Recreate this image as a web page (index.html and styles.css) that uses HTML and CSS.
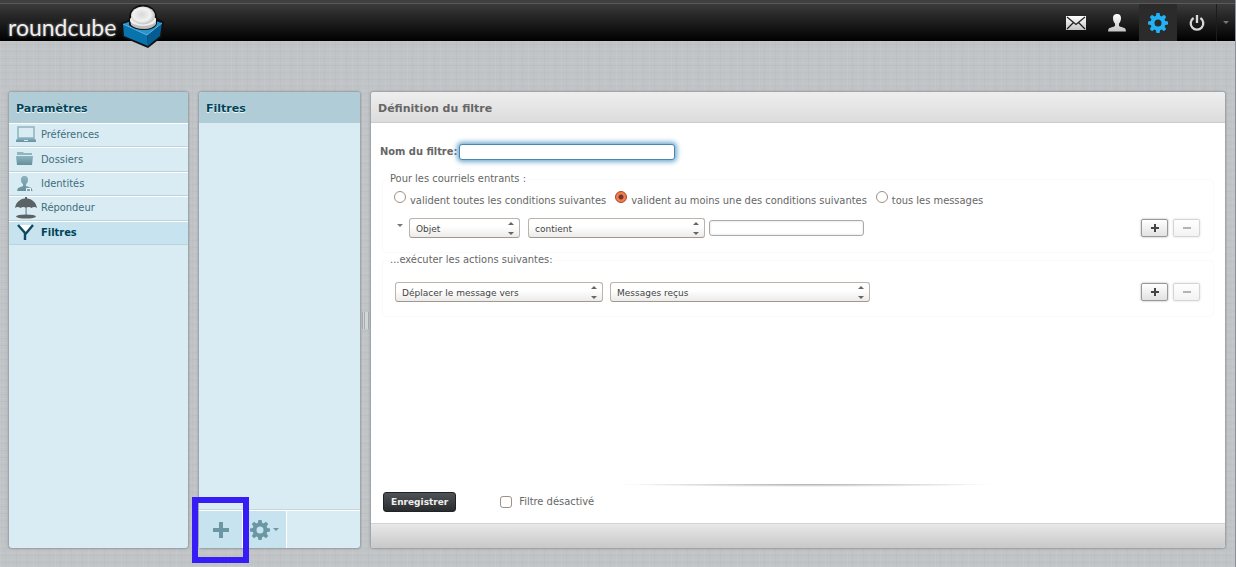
FILE: index.html
```html
<!DOCTYPE html>
<html lang="fr">
<head>
<meta charset="utf-8">
<title>Roundcube - Filtres</title>
<link rel="stylesheet" href="styles.css">
</head>
<body>
<svg class="defs" aria-hidden="true">
  <defs>
    <linearGradient id="silver" x1="0" y1="0" x2="0" y2="1"><stop offset="0" stop-color="#fff"/><stop offset="1" stop-color="#c4c4c4"/></linearGradient>
    <linearGradient id="teal" x1="0" y1="0" x2="0" y2="1"><stop offset="0" stop-color="#8db4c0"/><stop offset="1" stop-color="#648f9b"/></linearGradient>
    <radialGradient id="ball" cx=".45" cy=".45" r=".6"><stop offset="0" stop-color="#d8d8d8"/><stop offset=".6" stop-color="#f2f2f2"/><stop offset="1" stop-color="#b5b5b5"/></radialGradient>
    <symbol id="gear" viewBox="0 0 20 20"><path fill-rule="evenodd" d="M8.400 0h3.200l.5 2.800 1.500.6 2.400-1.600 2.200 2.200-1.600 2.400.6 1.500 2.800.5v3.200l-2.800.5-.6 1.500 1.600 2.400-2.200 2.200-2.400-1.600-1.500.6-.5 2.800H8.400l-.5-2.800-1.500-.6L4 18.200 1.800 16l1.600-2.400-.6-1.500L0 11.600V8.400l2.800-.5.6-1.500L1.800 4 4 1.800l2.400 1.600 1.500-.6zM10 6.500a3.500 3.500 0 1 0 0 7 3.500 3.500 0 0 0 0-7z"/></symbol>
  </defs>
</svg>

<header class="topbar">
  <a class="logo" href="#">
    <span class="logo-text">roundcube</span>
    <svg class="logo-cube" viewBox="0 0 44 44" aria-hidden="true">
      <path d="M0 18 10 14 33 11 43 17 41 32 27 43 1 32z" fill="#111"/>
      <path d="M2 19 21 12 41 18 26 30z" fill="#2a93cb"/>
      <path d="M2 19 26 30 27 41 3 31z" fill="#0873ad"/>
      <path d="M26 30 41 18 39 31 27 41z" fill="#045c91"/>
      <path d="M2 19 26 30 41 18" fill="none" stroke="#5ab8e6"/>
      <path d="M8 13a14 13 0 0 1 28-1v7q-3 6-13 6T8 20z" fill="#111"/>
      <path d="M9 14 35 13v6q-3 5-12 5T10 20z" fill="#bdbdbd"/>
      <ellipse cx="22" cy="15" rx="13" ry="6" fill="#efefef"/>
      <ellipse cx="22" cy="10.500" rx="12" ry="9" fill="url(#ball)"/>
    </svg>
  </a>
  <nav class="tasks">
    <a class="task" href="#" aria-label="Courriel"><svg width="20" height="14" viewBox="0 0 20 14"><path fill="url(#silver)" d="M0 0h20v14H0z"/><path d="M1 1l9 7.500L19 1M1 13l6.500-6.500M19 13l-6.500-6.500" fill="none" stroke="#222" stroke-width="1.300"/></svg></a>
    <a class="task" href="#" aria-label="Contacts"><svg width="18" height="18" viewBox="0 0 18 18"><path fill="url(#silver)" d="M9 0c3 0 4.200 2 4 4.500-.2 2.500-1 4-2 5V12c1 1 6 1.500 6.500 3L18 17.500H0L.5 15C1 13.500 6 13 7 12V9.500c-1-1-1.800-2.500-2-5C4.800 2 6 0 9 0z"/></svg></a>
    <a class="task task-active" href="#" aria-label="Paramètres"><svg width="20" height="20" fill="#21b1f5"><use href="#gear"/></svg></a>
    <a class="task" href="#" aria-label="Déconnexion"><svg width="16" height="16" viewBox="0 0 16 16" fill="none" stroke="#d8d8d8" stroke-width="2.300"><path d="M4.600 3A6.300 6.300 0 1 0 11.400 3M8 0v8"/></svg></a>
    <button class="task-more" aria-label="Plus"><span class="caret"></span></button>
  </nav>
</header>

<main class="content">
  <section class="panel blue sections">
    <h2 class="panel-title">Paramètres</h2>
    <nav class="list">
      <a class="item" href="#"><svg class="item-icon" viewBox="0 0 22 22"><rect x="3" y="3" width="16" height="11" fill="#d9ecf4" stroke="#8fb2bd" stroke-width="1.500"/><path fill="url(#teal)" d="M3 14h16l2 2v2H1v-2z"/><path fill="#d9ecf4" d="M9 16h4v1H9z"/></svg>Préférences</a>
      <a class="item" href="#"><svg class="item-icon" viewBox="0 0 22 22"><path fill="#8fb5bf" d="M2 3h6l1 1h8v2H2z"/><path fill="url(#teal)" d="M1 7h17l-1 9H2z"/></svg>Dossiers</a>
      <a class="item" href="#"><svg class="item-icon" viewBox="0 0 22 22"><path fill="url(#teal)" d="M9.500 3c3 0 3.500 2 3.500 4s-1 3.500-2 4v2l5.500 2 1 3H2l1-3 5-2v-2c-1-.5-2-2-2-4s.5-4 3.500-4z"/><path fill="#e7f4f8" d="M11 15h5v3h-5z"/><path fill="#7fa5af" d="M12 16h3v2h-3z"/></svg>Identités</a>
      <a class="item" href="#"><svg class="item-icon" viewBox="0 0 22 22"><path fill="#5b6266" d="M0 11C1 5 5 2 10 1.500V0h2v1.500C17 2 21 5 22 11c-2-1.500-4-1-5.500 0-2-1.500-3.500-1.500-5.500 0-2-1.500-3.500-1.500-5.500 0C4 10 2 9.500 0 11z"/><path fill="#7d868a" d="M10.500 10h1.200v9h-1.200z"/><ellipse cx="11" cy="19.500" rx="10" ry="2" fill="#5b6266"/></svg>Répondeur</a>
      <a class="item item-active" href="#"><svg class="item-icon" viewBox="0 0 22 22"><path fill="#fff" d="M4 3h13l-6.500 8z"/><path d="M3 3 10 11v7M18 3 10.500 12" fill="none" stroke="#0b4a60" stroke-width="2.400"/></svg>Filtres</a>
    </nav>
  </section>

  <section class="panel blue filters">
    <h2 class="panel-title">Filtres</h2>
    <div class="filter-list"></div>
    <div class="footer">
      <button class="footer-btn add" aria-label="Ajouter un filtre"><svg width="16" height="16" viewBox="0 0 16 16"><path fill="#6a97a3" d="M6 0h4v6h6v4h-6v6H6v-6H0V6h6z"/></svg></button>
      <button class="footer-btn" aria-label="Actions"><svg width="20" height="20" fill="#6a97a3"><use href="#gear"/></svg><span class="caret"></span></button>
    </div>
    <div class="highlight"></div>
  </section>

  <div class="splitter"></div>

  <section class="panel editor">
    <h2 class="panel-title">Définition du filtre</h2>
    <form class="form">
      <div class="name-row">
        <label for="name">Nom du filtre:</label>
        <input class="text name" id="name" type="text" autofocus>
      </div>
      <fieldset class="group">
        <legend>Pour les courriels entrants :</legend>
        <div class="radios">
          <label class="choice"><input type="radio" name="join">valident toutes les conditions suivantes</label>
          <label class="choice"><input type="radio" name="join" checked>valident au moins une des conditions suivantes</label>
          <label class="choice"><input type="radio" name="join">tous les messages</label>
        </div>
        <div class="rule">
          <button type="button" class="advanced" aria-label="Avancé"><span class="caret"></span></button>
          <span class="select field"><select aria-label="Champ"><option>Objet</option></select></span>
          <span class="select operator"><select aria-label="Opérateur"><option>contient</option></select></span>
          <input class="text value" type="text" aria-label="Valeur">
          <span class="row-buttons"><button type="button" class="mini plus" aria-label="Ajouter"></button><button type="button" class="mini" disabled aria-label="Supprimer"></button></span>
        </div>
      </fieldset>
      <fieldset class="group">
        <legend>...exécuter les actions suivantes:</legend>
        <div class="rule action-rule">
          <span class="select action"><select aria-label="Action"><option>Déplacer le message vers</option></select></span>
          <span class="select target"><select aria-label="Dossier"><option>Messages reçus</option></select></span>
          <span class="row-buttons"><button type="button" class="mini plus" aria-label="Ajouter"></button><button type="button" class="mini" disabled aria-label="Supprimer"></button></span>
        </div>
      </fieldset>
      <div class="submit-row">
        <button class="save" type="button">Enregistrer</button>
        <label class="disable"><input type="checkbox">Filtre désactivé</label>
      </div>
    </form>
    <div class="editor-footer"></div>
  </section>
</main>
</body>
</html>
```
FILE: styles.css
```css
* { box-sizing: border-box; }
body {
  margin: 0;
  min-height: 100vh;
  display: flex;
  flex-direction: column;
  font: 11px/14px "DejaVu Sans Condensed", "DejaVu Sans", sans-serif;
  color: #666;
  background-color: #c0c4c7;
  background-image:
    repeating-linear-gradient(90deg, rgba(255,255,255,.06) 0 1px, transparent 1px 5px, rgba(90,100,110,.04) 5px 6px, transparent 6px 11px),
    repeating-linear-gradient(0deg, rgba(255,255,255,.06) 0 1px, transparent 1px 4px, rgba(90,100,110,.04) 4px 5px, transparent 5px 7px);
  border-right: 1px solid #8f9296;
}
button, input, select { font: inherit; color: inherit; margin: 0; }
button { padding: 0; border: 0; background: none; }
a { color: inherit; text-decoration: none; }
.defs { position: absolute; width: 0; height: 0; }

.topbar {
  height: 41px;
  display: flex;
  justify-content: space-between;
  border-top: 3px solid #404040;
  background: linear-gradient(#3c3c3c, #000);
  box-shadow: inset 0 1px #5a5a5a;
}
.logo { display: flex; align-items: flex-start; padding-left: 8px; }
.logo-text {
  width: 113px;
  padding-top: 11px;
  font: 23px/26px Lato, sans-serif;
  color: #eee;
  text-shadow: 0 0 3px #888;
}
.logo-cube { width: 44px; height: 44px; margin-top: 2px; }
.tasks { display: flex; padding-top: 1px; }
.task {
  width: 38px;
  display: flex;
  align-items: center;
  justify-content: center;
}
.task + .task { margin-left: 3px; }
.task-active + .task { margin-left: 1px; }
.task-active { background: #2b2b2b; }
.task-more {
  width: 19px;
  display: flex;
  align-items: center;
  justify-content: center;
  border-left: 1px solid #1c1c1c;
}
.caret {
  display: block;
  border: 3px solid transparent;
  border-top-color: #777;
  border-bottom: 0;
}

.content {
  flex: 1;
  display: flex;
  padding: 51px 10px 19px 9px;
}
.panel {
  display: flex;
  flex-direction: column;
  border-radius: 3px;
  background: #fff;
  box-shadow: 0 0 2px 1px #969a9c;
}
.panel-title {
  height: 31px;
  margin: 0;
  padding: 0 7px;
  font: bold 11px/33px "DejaVu Sans", sans-serif;
  color: #666;
  border-bottom: 1px solid #ccc;
  border-radius: 3px 3px 0 0;
  background: linear-gradient(#eee, #dcdcdc);
}
.blue { position: relative; background: #d9ecf4; }
.blue .panel-title {
  color: #004458;
  background: #b0ccd7;
  border-bottom-color: #b0ccd7;
  text-shadow: 0 1px 1px #fff;
}
.sections { width: 179px; margin-right: 11px; }
.filters { width: 161px; }

.list { height: 122px; display: grid; grid-auto-rows: 1fr; }
.item {
  display: flex;
  align-items: center;
  gap: 4px;
  padding-left: 6px;
  color: #3f6d7b;
  border-top: 1px solid #fff;
  border-bottom: 1px solid #bbd3da;
}
.item-icon { width: 22px; height: 22px; }
.item-active { font-weight: bold; color: #004458; background: #c7e3ef; }

.filter-list { flex: 1; }
.footer {
  height: 38px;
  display: flex;
  border-top: 1px solid #fff;
  box-shadow: 0 -1px #c5d5da;
}
.footer-btn {
  width: 44px;
  display: flex;
  align-items: center;
  justify-content: center;
  gap: 3px;
  background: #c7e3ef;
  border-right: 1px solid #fff;
}
.footer-btn .caret { border-top-color: #6a97a3; }
.highlight {
  position: absolute;
  left: -7px;
  bottom: -15px;
  width: 57px;
  height: 66px;
  border: 6px solid #371df5;
}

.splitter {
  width: 11px;
  display: flex;
  align-items: center;
  justify-content: center;
}
.splitter::before {
  content: "";
  width: 5px;
  height: 17px;
  border: 1px solid #a4abae;
  border-width: 0 1px;
  background: linear-gradient(90deg, #d0d6d8 0 1px, #a4abae 1px 2px, #d0d6d8 2px);
}

.editor { flex: 1; min-width: 0; }
.form { flex: 1; display: flex; flex-direction: column; padding: 21px 11px 11px 9px; }
.name-row { display: flex; align-items: center; gap: 2px; }
.name-row label { font-weight: bold; }
.text {
  height: 16px;
  padding: 0 2px;
  border: 1px solid #aaa;
  border-radius: 3px;
  background: #fff;
  box-shadow: inset 0 0 2px 1px #eee;
}
.name { width: 216px; }
.name:focus { outline: 0; border-color: #4787b1; box-shadow: 0 0 5px 2px #71a9ce; }
.value { width: 155px; }

.group {
  min-width: 0;
  margin: 12px 0 0 2px;
  padding: 0 13px 14px 7px;
  border: 1px solid #fafafa;
  border-radius: 4px;
}
.group + .group { margin-top: 0; }
legend { padding: 0; }
.radios { display: flex; gap: 9px; padding: 5px 0 0 4px; }
.choice { display: flex; align-items: flex-start; gap: 4px; line-height: 20px; }
input[type="radio"], input[type="checkbox"] {
  appearance: none;
  width: 12px;
  height: 12px;
  border: 1px solid #a08f84;
  border-radius: 50%;
  background: #fff;
}
input[type="radio"]:checked {
  border-color: #a94420;
  background: radial-gradient(circle, #6d3a2a 0 2px, #f37a51 3px);
}
input[type="checkbox"] { border-radius: 3px; }

.rule { display: flex; align-items: center; padding-top: 7px; }
.advanced { width: 19px; height: 16px; display: flex; justify-content: center; align-self: flex-start; padding-top: 6px; }
.select { position: relative; }
.select select {
  appearance: none;
  display: block;
  width: 100%;
  height: 20px;
  padding: 1px 20px 0 6px;
  font: 9px "DejaVu Sans", sans-serif;
  color: #444;
  border: 1px solid #bdb3ab;
  border-bottom-color: #a3988f;
  border-radius: 3px;
  background: linear-gradient(#fff 40%, #ecebe9);
}
.select::before, .select::after {
  content: "";
  position: absolute;
  right: 6px;
  border: 3px solid transparent;
  pointer-events: none;
}
.select::before { top: 4px; border-top: 0; border-bottom-color: #666; }
.select::after { bottom: 3px; border-bottom: 0; border-top-color: #666; }
.field { width: 111px; }
.operator { width: 177px; margin: 0 4px 0 8px; }
.action { width: 208px; margin-right: 7px; }
.target { width: 260px; }
.action-rule { padding: 15px 0 0 5px; }
.row-buttons { margin-left: auto; display: flex; gap: 5px; }
.mini {
  position: relative;
  width: 27px;
  height: 18px;
  border: 1px solid #999;
  border-radius: 2px;
  background: linear-gradient(#fff, #e2e2e2);
  box-shadow: 0 0 2px #999;
  color: #444;
}
.mini::before, .plus::after {
  content: "";
  position: absolute;
  left: 9px;
  top: 7px;
  width: 8px;
  height: 2px;
  background: currentColor;
}
.plus::after { left: 12px; top: 4px; width: 2px; height: 8px; }
.mini:disabled { opacity: .4; }

.submit-row {
  display: flex;
  align-items: center;
  gap: 44px;
  margin-top: auto;
  padding: 8px 0 0 3px;
  background: radial-gradient(ellipse 190px 3px at 426px 0, #aaa, transparent) no-repeat;
}
.save {
  height: 20px;
  padding: 0 7px;
  font: bold 9px "DejaVu Sans", sans-serif;
  color: #eee;
  border: 1px solid #1d2326;
  border-radius: 3px;
  background: linear-gradient(#505355, #292c2e);
}
.disable { display: flex; align-items: center; gap: 7px; }
.editor-footer {
  height: 25px;
  border-top: 1px solid #d3d3d3;
  border-radius: 0 0 3px 3px;
  background: linear-gradient(#e8e8e8, #c8c8c8);
}
```
